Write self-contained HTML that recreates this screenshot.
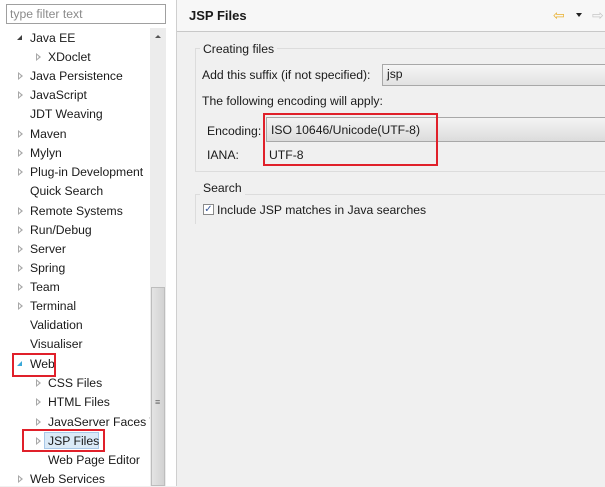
<!DOCTYPE html>
<html><head><style>
body{margin:0;width:605px;height:486px;overflow:hidden;background:#f0f0f0;font-family:"Liberation Sans",sans-serif;font-size:12.2px;color:#1a1a1a;position:relative}
.a{position:absolute;white-space:nowrap}
.it{position:absolute;white-space:nowrap;line-height:16px}
.ar{position:absolute;width:0;height:0;border-top:4px solid transparent;border-bottom:4px solid transparent;border-left:5px solid #a8a8a8}
.ar:after{content:"";position:absolute;left:-4px;top:-2px;border-top:2px solid transparent;border-bottom:2px solid transparent;border-left:2.5px solid #fff}
.red{position:absolute;border:2px solid #e0202a;box-sizing:border-box}
</style></head><body>
<div class="a" style="left:0;top:0;width:176px;height:486px;background:#fff"></div>
<div class="a" style="left:176px;top:0;width:1px;height:486px;background:#cfcfcf"></div>
<div class="a" style="left:6px;top:4px;height:18px;border:1px solid #a0a0a0;background:#fff;color:#8a8a8a;line-height:18px;padding-left:3px;width:155px">type filter text</div>
<div class="a" style="left:150px;top:28px;width:16px;height:458px;background:#ececec"></div>
<div class="a" style="left:151px;top:287px;width:14px;height:199px;background:linear-gradient(90deg,#e4e4e4,#d2d2d2);border:1px solid #bdbdbd;box-sizing:border-box"></div>
<div class="a" style="left:155px;top:400px;font-size:9px;color:#666;line-height:4px">≡</div>
<div class="a" style="left:155px;top:35px;border-left:3px solid transparent;border-right:3px solid transparent;border-bottom:3px solid #555"></div>
<div class="a" style="left:17px;top:35px;border-left:5px solid transparent;border-bottom:5px solid #404040"></div>
<div class="it" style="left:30px;top:30px">Java EE</div>
<div class="ar" style="left:36px;top:53px"></div><div class="it" style="left:48px;top:49px">XDoclet</div>
<div class="ar" style="left:18px;top:72px"></div><div class="it" style="left:30px;top:68px">Java Persistence</div>
<div class="ar" style="left:18px;top:91px"></div><div class="it" style="left:30px;top:87px">JavaScript</div>
<div class="it" style="left:30px;top:106px">JDT Weaving</div>
<div class="ar" style="left:18px;top:130px"></div><div class="it" style="left:30px;top:126px">Maven</div>
<div class="ar" style="left:18px;top:149px"></div><div class="it" style="left:30px;top:145px">Mylyn</div>
<div class="ar" style="left:18px;top:168px"></div><div class="it" style="left:30px;top:164px">Plug-in Development</div>
<div class="it" style="left:30px;top:183px">Quick Search</div>
<div class="ar" style="left:18px;top:207px"></div><div class="it" style="left:30px;top:203px">Remote Systems</div>
<div class="ar" style="left:18px;top:226px"></div><div class="it" style="left:30px;top:222px">Run/Debug</div>
<div class="ar" style="left:18px;top:245px"></div><div class="it" style="left:30px;top:241px">Server</div>
<div class="ar" style="left:18px;top:264px"></div><div class="it" style="left:30px;top:260px">Spring</div>
<div class="ar" style="left:18px;top:283px"></div><div class="it" style="left:30px;top:279px">Team</div>
<div class="ar" style="left:18px;top:302px"></div><div class="it" style="left:30px;top:298px">Terminal</div>
<div class="it" style="left:30px;top:317px">Validation</div>
<div class="it" style="left:30px;top:336px">Visualiser</div>
<div class="a" style="left:17px;top:361px;border-left:5px solid transparent;border-bottom:5px solid #3aa8d8"></div>
<div class="it" style="left:30px;top:356px">Web</div>
<div class="ar" style="left:36px;top:379px"></div><div class="it" style="left:48px;top:375px">CSS Files</div>
<div class="ar" style="left:36px;top:398px"></div><div class="it" style="left:48px;top:394px">HTML Files</div>
<div class="ar" style="left:36px;top:418px"></div><div class="it" style="left:48px;top:414px;width:102px;overflow:hidden">JavaServer Faces T</div>
<div class="a" style="left:44px;top:432px;width:55px;height:17px;background:#dbeaf7;border:1px solid #a8c8e8;box-sizing:border-box"></div>
<div class="ar" style="left:36px;top:437px"></div><div class="it" style="left:48px;top:433px">JSP Files</div>
<div class="it" style="left:48px;top:452px">Web Page Editor</div>
<div class="ar" style="left:18px;top:475px"></div><div class="it" style="left:30px;top:471px">Web Services</div>
<div class="red" style="left:12px;top:353px;width:44px;height:24px"></div>
<div class="red" style="left:22px;top:429px;width:83px;height:23px"></div>

<div class="a" style="left:177px;top:0;width:428px;height:31px;background:#f7f7f7;border-bottom:1px solid #c8c8c8"></div>
<div class="a" style="left:189px;top:8px;font-weight:bold;font-size:13px">JSP Files</div>
<div class="a" style="left:553px;top:8px;color:#e8b030;font-size:14px;line-height:14px">⇦</div>
<div class="a" style="left:576px;top:13px;border-left:3px solid transparent;border-right:3px solid transparent;border-top:4px solid #222"></div>
<div class="a" style="left:592px;top:8px;color:#c8c8c8;font-size:14px;line-height:14px">⇨</div>
<div class="a" style="left:195px;top:48px;width:420px;height:124px;border:1px solid #dcdcdc;box-sizing:border-box"></div>
<div class="a" style="left:200px;top:42px;background:#f0f0f0;padding:0 3px">Creating files</div>
<div class="a" style="left:202px;top:68px">Add this suffix (if not specified):</div>
<div class="a" style="left:382px;top:64px;width:240px;height:22px;border:1px solid #a8a8a8;background:linear-gradient(#f6f6f6,#e2e2e2);box-sizing:border-box;padding:2px 4px">jsp</div>
<div class="a" style="left:202px;top:94px">The following encoding will apply:</div>
<div class="a" style="left:207px;top:124px">Encoding:</div>
<div class="a" style="left:266px;top:117px;width:350px;height:25px;border:1px solid #a8a8a8;background:linear-gradient(#f4f4f4,#dcdcdc);box-sizing:border-box;padding:5px 4px">ISO 10646/Unicode(UTF-8)</div>
<div class="a" style="left:207px;top:148px">IANA:</div>
<div class="a" style="left:269px;top:148px">UTF-8</div>
<div class="red" style="left:263px;top:113px;width:175px;height:53px"></div>
<div class="a" style="left:195px;top:194px;width:420px;height:30px;border:1px solid #dcdcdc;border-bottom:none;box-sizing:border-box"></div>
<div class="a" style="left:200px;top:181px;background:#f0f0f0;padding:0 3px">Search</div>
<div class="a" style="left:203px;top:204px;width:11px;height:11px;border:1px solid #8a8a8a;background:#fff;box-sizing:border-box;font-size:10px;line-height:9px;color:#3a5a9a;text-align:center">✓</div>
<div class="a" style="left:217px;top:203px">Include JSP matches in Java searches</div>
</body></html>
